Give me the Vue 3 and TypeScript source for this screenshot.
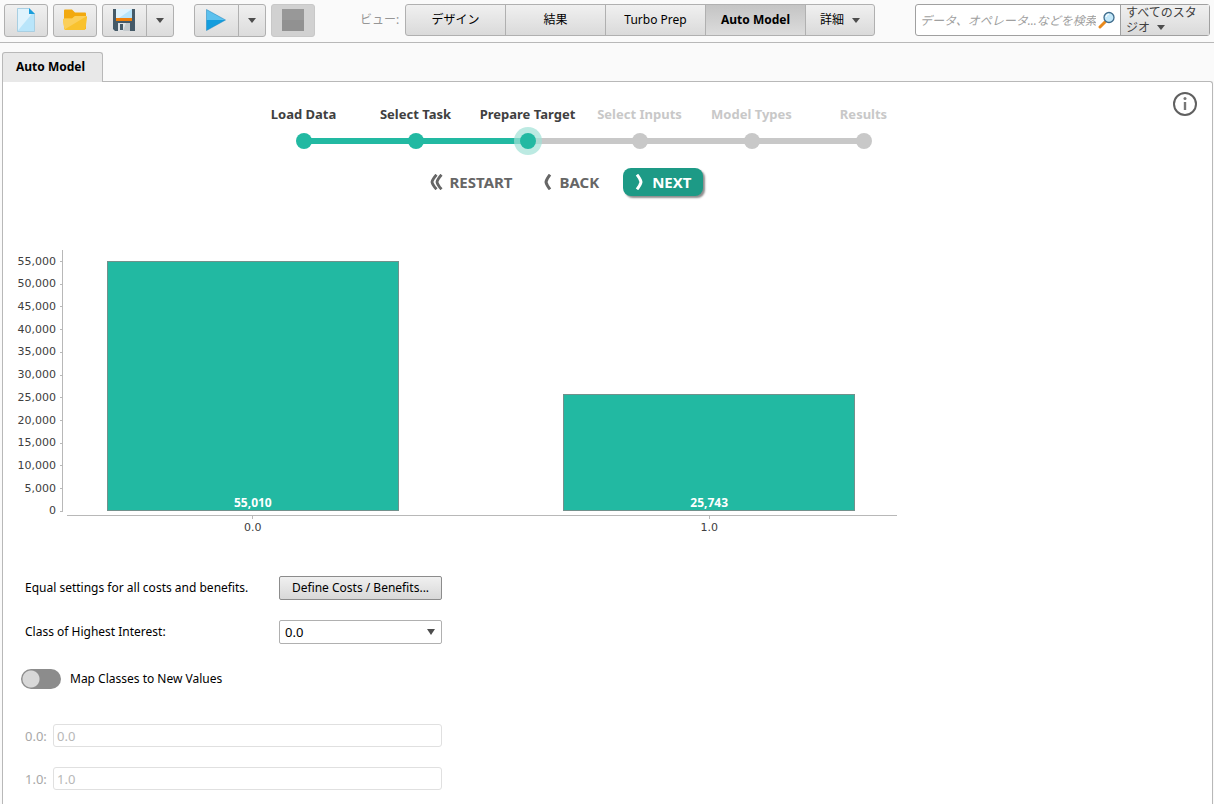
<script setup lang="ts">
import { ref } from 'vue'

interface Bar {
  label: string
  value: number
}

const steps = ['Load Data', 'Select Task', 'Prepare Target', 'Select Inputs', 'Model Types', 'Results']
const current = 2

const views = ['デザイン', '結果', 'Turbo Prep', 'Auto Model']
const activeView = ref('Auto Model')

const bars: Bar[] = [
  { label: '0.0', value: 55010 },
  { label: '1.0', value: 25743 },
]
const axisMax = 57500
const ticks = Array.from({ length: 12 }, (_, i) => 55000 - i * 5000)
const format = (n: number): string => n.toLocaleString('en-US')

const search = ref('')
const interest = ref('0.0')
const mapClasses = ref(false)
const mapped = ref(['0.0', '1.0'])
</script>

<template>
  <div class="app">
    <header class="toolbar">
      <div class="group">
        <button type="button" class="tool" aria-label="New">
          <svg width="18" height="24" viewBox="0 0 18 24">
            <path d="M.5.5h11.500l5.500 5.500v17.500H.5z" fill="#b9e5fa" />
            <path d="M.5.5h11.500l4 4L.5 23z" fill="#dff3fd" />
            <path d="M.5.5h11.500l5.500 5.500v17.500H.5z" fill="none" stroke="#a9cfe2" />
            <path d="M12 0v6h6z" fill="#1a9edb" />
          </svg>
        </button>
      </div>
      <div class="group">
        <button type="button" class="tool" aria-label="Open">
          <svg width="24" height="22" viewBox="0 0 24 22">
            <path d="M1 20V1.500q0-1 1-1h7l3 3h10q1 0 1 1V20z" fill="#f2a90f" />
            <path d="M0 11q0-1.500 1.500-1.500H9L12 7h11q1.200 0 1 1.500L22.500 20q-.2 1-1.200 1H2.500q-1 0-1.200-1z" fill="#f9c22e" />
            <path d="M0 11q0-1.500 1.500-1.500H9L12 7h11l.5.3L1.500 20.500z" fill="#fbcf5a" />
          </svg>
        </button>
      </div>
      <div class="group">
        <button type="button" class="tool" aria-label="Save">
          <svg width="22" height="22" viewBox="0 0 22 22">
            <path d="M0 0h22v22H2l-2-2z" fill="#455a68" />
            <path d="M3 0h16v9H3z" fill="#b7e4fa" />
            <path d="M3 0h16L6 9H3z" fill="#dff3fd" />
            <path d="M3 9h16v3H3z" fill="#ef7f0a" />
            <path d="M5 14h12v8H5z" fill="#dfe3e6" />
            <path d="M7 15h3v6H7z" fill="#455a68" />
            <path d="M13 14h4v8h-7z" fill="#c3c9cd" />
          </svg>
        </button>
        <button type="button" class="drop" aria-label="Save options">
          <svg width="8" height="5" viewBox="0 0 8 5"><path d="M0 0h8L4 5z" fill="#4d4d4d" /></svg>
        </button>
      </div>
      <div class="group run">
        <button type="button" class="tool" aria-label="Run">
          <svg width="20" height="22" viewBox="0 0 20 22">
            <path d="M.5.5v10.500h19z" fill="#5cc1ee" />
            <path d="M.5 11v10.500L19.500 11z" fill="#149ddd" />
            <path d="M.5.5v21L19.500 11z" fill="none" stroke="#1684c0" stroke-opacity=".5" />
          </svg>
        </button>
        <button type="button" class="drop" aria-label="Run options">
          <svg width="8" height="5" viewBox="0 0 8 5"><path d="M0 0h8L4 5z" fill="#4d4d4d" /></svg>
        </button>
      </div>
      <div class="group">
        <button type="button" class="tool" aria-label="Stop" disabled>
          <svg width="22" height="22" viewBox="0 0 22 22">
            <path d="M0 0h22v22H0z" fill="#919191" />
            <path d="M0 0h22v11H0z" fill="#989898" />
          </svg>
        </button>
      </div>

      <span class="view-label">ビュー:</span>
      <nav class="views">
        <button
          v-for="view in views"
          :key="view"
          type="button"
          :class="{ active: view === activeView }"
          @click="activeView = view"
        >{{ view }}</button>
        <button type="button" class="more">
          詳細
          <svg width="8" height="5" viewBox="0 0 8 5"><path d="M0 0h8L4 5z" fill="#4d4d4d" /></svg>
        </button>
      </nav>

      <div class="search">
        <input v-model="search" type="text" placeholder="データ、オペレータ...などを検索" aria-label="検索" />
        <svg class="lens" width="18" height="18" viewBox="0 0 18 18">
          <path d="M2 16l5-5" stroke="#e8891c" stroke-width="3" stroke-linecap="round" />
          <circle cx="11" cy="6.500" r="5" fill="#c3e8fa" stroke="#3f6c8c" stroke-width="1.300" />
          <path d="M8 6q.5-2.500 3-3" fill="none" stroke="#fff" stroke-width="1.200" />
        </svg>
        <button type="button">
          すべてのスタジオ
          <svg width="8" height="5" viewBox="0 0 8 5"><path d="M0 0h8L4 5z" fill="#4d4d4d" /></svg>
        </button>
      </div>
    </header>

    <div class="tabs"><button type="button" class="tab">Auto Model</button></div>

    <main class="panel">
      <div class="head">
        <div class="wizard">
          <ol class="steps">
            <li
              v-for="(step, i) in steps"
              :key="step"
              :class="{ done: i <= current, passed: i < current, current: i === current }"
            >
              <span class="step-name">{{ step }}</span>
              <span class="track"><i class="dot"></i></span>
            </li>
          </ol>
          <div class="actions">
            <button type="button">
              <svg width="13" height="16" viewBox="0 0 13 16" fill="none" stroke="#666" stroke-width="2.800">
                <path d="M6.500.7q-4 4.500-4.500 7.300q.5 2.800 4.500 7.300M11.500.7q-4 4.500-4.500 7.300q.5 2.800 4.500 7.300" />
              </svg>
              RESTART
            </button>
            <button type="button">
              <svg width="10" height="16" viewBox="0 0 10 16" fill="none" stroke="#666" stroke-width="3">
                <path d="M7 .7q-3.500 4.500-4 7.300q.5 2.800 4 7.300" />
              </svg>
              BACK
            </button>
            <button type="button" class="next">
              <svg width="9" height="16" viewBox="0 0 9 16" fill="none" stroke="#fff" stroke-width="3">
                <path d="M2 .7q3.500 4.500 4 7.300q-.5 2.800-4 7.300" />
              </svg>
              NEXT
            </button>
          </div>
        </div>
        <button type="button" class="info" aria-label="Info">
          <svg width="26" height="26" viewBox="0 0 26 26">
            <circle cx="13" cy="13" r="11" fill="none" stroke="#606060" stroke-width="2" />
            <circle cx="13" cy="7.500" r="1.500" fill="#777" />
            <path d="M13 11v8" stroke="#777" stroke-width="2.400" />
          </svg>
        </button>
      </div>

      <section class="chart">
        <ul class="y-axis">
          <li v-for="tick in ticks" :key="tick">{{ format(tick) }}</li>
        </ul>
        <div class="plot">
          <div class="bars">
            <div
              v-for="bar in bars"
              :key="bar.label"
              class="bar"
              :style="{ height: (bar.value / axisMax) * 100 + '%' }"
            >{{ format(bar.value) }}</div>
          </div>
          <div class="x-axis">
            <span v-for="bar in bars" :key="bar.label">{{ bar.label }}</span>
          </div>
        </div>
      </section>

      <form class="settings" @submit.prevent>
        <div class="row">
          <span class="caption">Equal settings for all costs and benefits.</span>
          <button type="button" class="define">Define Costs / Benefits...</button>
        </div>
        <div class="row">
          <label class="caption" for="interest">Class of Highest Interest:</label>
          <div class="select">
            <select id="interest" v-model="interest">
              <option>0.0</option>
              <option>1.0</option>
            </select>
            <svg width="8" height="6" viewBox="0 0 8 6"><path d="M0 0h8L4 6z" fill="#4d4d4d" /></svg>
          </div>
        </div>
        <label class="switch">
          <input v-model="mapClasses" type="checkbox" />
          Map Classes to New Values
        </label>
        <div v-for="(bar, i) in bars" :key="bar.label" class="mapping">
          <label :for="'map-' + i">{{ bar.label }}:</label>
          <input :id="'map-' + i" v-model="mapped[i]" type="text" :disabled="!mapClasses" />
        </div>
      </form>
    </main>
  </div>
</template>

<style>
body {
  margin: 0;
  overflow: hidden;
}
</style>

<style scoped>
.app {
  display: flex;
  flex-direction: column;
  min-height: 100vh;
  background: #fafafa;
  color: #000;
  font: 12px/16px "Noto Sans", "Noto Sans CJK JP", sans-serif;
}
.app * {
  box-sizing: border-box;
}
button,
input,
select {
  margin: 0;
  padding: 0;
  border: 0;
  background: none;
  color: inherit;
  font: inherit;
}
svg {
  display: block;
  flex: none;
}

.toolbar {
  display: flex;
  align-items: flex-start;
  height: 43px;
  padding: 4px 4px 0;
  border-bottom: 1px solid #b8b8b8;
}
.group {
  display: flex;
  height: 33px;
  margin-right: 5px;
}
.run {
  margin-left: 15px;
}
.group button {
  display: flex;
  align-items: center;
  justify-content: center;
  padding-bottom: 1px;
  border: 1px solid #b0b0b0;
  background: linear-gradient(#f0f0f0, #dcdcdc);
}
.tool {
  width: 44px;
  border-radius: 3px;
}
.tool:not(:last-child) {
  width: 45px;
  padding-right: 2px;
  border-radius: 3px 0 0 3px;
}
.drop {
  width: 28px;
  margin-left: -1px;
  border-radius: 0 3px 3px 0;
}
.group .tool:disabled {
  border-color: #c8c8c8;
  background: #d1d1d1;
}
.view-label {
  margin-left: 40px;
  width: 45px;
  line-height: 31px;
  color: #969696;
}
.views {
  display: flex;
  height: 32px;
  border: 1px solid #b0b0b0;
  border-radius: 3px;
  background: linear-gradient(#f0f0f0, #dadada);
}
.views button {
  width: 100px;
  border-right: 1px solid #b0b0b0;
}
.views .active {
  background: linear-gradient(#c4c4c4, #dcdcdc);
  font-weight: 700;
}
.views .more {
  display: flex;
  align-items: center;
  justify-content: center;
  gap: 8px;
  width: 68px;
  border: 0;
}
.search {
  display: flex;
  align-items: center;
  width: 295px;
  height: 32px;
  margin-left: auto;
  border: 1px solid #a0a0a0;
  border-radius: 3px;
  background: #fff;
}
.search input {
  flex: 1;
  min-width: 0;
  height: 28px;
  margin-left: 4px;
  outline: 0;
}
.search input::placeholder {
  color: #a0a0a0;
  font-style: italic;
  opacity: 1;
}
.lens {
  margin: 0 4px 0 2px;
}
.search button {
  width: 89px;
  height: 30px;
  padding: 0 5px;
  border-left: 1px solid #a0a0a0;
  background: linear-gradient(#f0f0f0, #dadada);
  color: #404040;
  line-height: 15px;
  text-align: left;
  word-break: break-all;
}
.search button svg {
  display: inline-block;
  margin-left: 4px;
  vertical-align: 2px;
}

.tabs {
  display: flex;
  padding: 9px 2px 0;
}
.tab {
  position: relative;
  width: 101px;
  height: 30px;
  margin-bottom: -1px;
  padding: 0 4px 2px 0;
  border: 1px solid #b8b8b8;
  border-bottom: 0;
  border-radius: 3px 3px 0 0;
  background: #e8e8e8;
  font-weight: 700;
}
.panel {
  flex: 1;
  margin: 0 1px 0 2px;
  border: 1px solid #b8b8b8;
  border-bottom: 0;
  border-top-right-radius: 3px;
  background: #fff;
}

.head {
  display: flex;
  align-items: flex-start;
}
.wizard {
  display: flex;
  flex: 1;
  flex-direction: column;
  align-items: center;
  padding-top: 24px;
}
.steps {
  display: flex;
  margin: 0;
  padding: 0;
  list-style: none;
}
.steps li {
  width: 112px;
  color: #c8c8c8;
  font-size: 13px;
  font-weight: 700;
  text-align: center;
}
.steps .done {
  color: #404040;
}
.step-name {
  display: block;
  white-space: nowrap;
}
.track {
  display: flex;
  align-items: center;
  justify-content: center;
  height: 28px;
  margin-top: 5px;
  background: linear-gradient(#c8c8c8, #c8c8c8) center / 100% 6px no-repeat;
}
.steps li:first-child .track {
  background: linear-gradient(#22b9a2, #22b9a2) right / 50% 6px no-repeat;
}
.passed .track {
  background-image: linear-gradient(#22b9a2, #22b9a2);
}
.current .track {
  background-image: linear-gradient(90deg, #22b9a2 50%, #c8c8c8 50%);
}
.steps li:last-child .track {
  background-position: left;
  background-size: 50% 6px;
}
.dot {
  width: 16px;
  height: 16px;
  border-radius: 50%;
  background: #c8c8c8;
}
.done .dot {
  background: #22b9a2;
}
.current .dot {
  box-shadow: 0 0 0 6px rgba(160, 225, 214, 0.7);
}
.actions {
  display: flex;
  align-items: center;
  gap: 30px;
  margin-top: 13px;
  padding-right: 34px;
}
.actions button {
  display: flex;
  align-items: center;
  gap: 7px;
  color: #666;
  font-size: 15px;
  font-weight: 700;
}
.actions .next {
  height: 28px;
  margin-left: -6px;
  padding: 0 12px;
  gap: 8px;
  border-radius: 8px;
  background: #1d9a86;
  box-shadow: 2px 2px 2px rgba(0, 0, 0, 0.45);
  color: #fff;
}
.info {
  margin: 9px 14px 0 8px;
}

.chart {
  display: flex;
  align-items: flex-start;
  max-width: 894px;
  margin-top: 54px;
  color: #404040;
  font-family: "DejaVu Sans", sans-serif;
  font-size: 11px;
}
.y-axis {
  display: flex;
  flex-direction: column;
  justify-content: space-between;
  width: 60px;
  height: 262px;
  margin: 0;
  padding: 11px 0 0;
  border-right: 1px solid #b8b8b8;
  list-style: none;
}
.y-axis li {
  display: flex;
  align-items: center;
  justify-content: flex-end;
  gap: 4px;
  height: 1px;
}
.y-axis li::after {
  content: "";
  width: 2px;
  height: 1px;
  background: #b8b8b8;
}
.plot {
  flex: 1;
  margin-left: 4px;
}
.bars {
  display: flex;
  align-items: flex-end;
  gap: 22%;
  height: 261px;
  padding: 0 42px 0 40px;
}
.bar {
  display: flex;
  flex: 1;
  align-items: flex-end;
  justify-content: center;
  border: 1px solid #71918c;
  background: #22b9a2;
  color: #fff;
  font-family: "Noto Sans", sans-serif;
  font-size: 12px;
  font-weight: 700;
  line-height: 15px;
}
.x-axis {
  display: flex;
  gap: 22%;
  margin-top: 4px;
  padding: 0 42px 0 40px;
  border-top: 1px solid #b8b8b8;
}
.x-axis span {
  display: flex;
  flex: 1;
  flex-direction: column;
  align-items: center;
}
.x-axis span::before {
  content: "";
  width: 1px;
  height: 3px;
  margin-bottom: 1px;
  background: #b8b8b8;
}

.settings {
  width: 439px;
  margin-top: 40px;
  padding-left: 18px;
}
.row {
  display: flex;
  align-items: center;
  justify-content: space-between;
  height: 24px;
  margin-bottom: 20px;
  padding-left: 4px;
}
.define,
.select {
  width: 163px;
  height: 24px;
  border: 1px solid #b0b0b0;
  border-radius: 2px;
}
.define {
  border-color: #8c8c8c;
  background: linear-gradient(#f0f0f0, #d8d8d8);
}
.select {
  display: flex;
  align-items: center;
  padding-right: 6px;
  font-size: 13px;
}
.select select {
  flex: 1;
  height: 22px;
  padding-left: 5px;
  appearance: none;
}
.switch {
  display: flex;
  align-items: center;
  gap: 9px;
  height: 20px;
  margin: 25px 0 35px;
}
.switch input {
  width: 40px;
  height: 20px;
  border-radius: 10px;
  appearance: none;
  background: radial-gradient(circle at 10px 10px, #d8d8d8 8px, #8c8c8c 9px);
}
.switch input:checked {
  background: radial-gradient(circle at 30px 10px, #fff 8px, #22b9a2 9px);
}
.mapping {
  display: flex;
  align-items: center;
  height: 23px;
  margin-bottom: 20px;
  padding-left: 4px;
  color: #a8a8a8;
  font-size: 13px;
}
.mapping label {
  width: 28px;
}
.mapping input {
  flex: 1;
  height: 23px;
  padding: 0 3px;
  border: 1px solid #e0e0e0;
  border-radius: 3px;
}
.mapping input:disabled {
  color: #b8b8b8;
}
</style>
